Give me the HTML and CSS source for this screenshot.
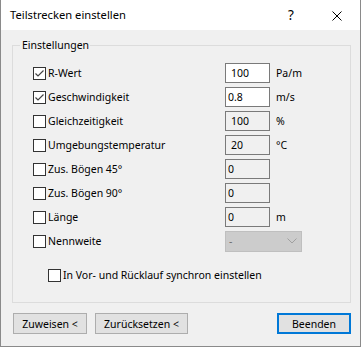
FILE: index.html
```html
<!DOCTYPE html>
<html lang="de">
<head>
<meta charset="utf-8">
<title>Teilstrecken einstellen</title>
<link rel="stylesheet" href="styles.css">
</head>
<body>
<div class="window">
  <div class="titlebar">
    <div class="title">Teilstrecken einstellen</div>
    <div class="tb-btn help">?</div>
    <div class="tb-btn close">
      <svg width="10" height="10" viewBox="0 0 10 10"><path d="M0.5 0.5 L9.5 9.5 M9.5 0.5 L0.5 9.5" stroke="#000" stroke-width="1" fill="none"/></svg>
    </div>
  </div>
  <div class="body">
    <div class="group">
      <div class="group-title">Einstellungen</div>
      <div class="rows">
        <div class="row">
          <label class="chk"><span class="box"><svg width="11" height="11" viewBox="0 0 11 11"><path d="M1.5 5.5 L4 8 L9.5 2.5" stroke="#444" stroke-width="1.2" fill="none"/></svg></span>R-Wert</label>
          <div class="field">100</div><span class="unit">Pa/m</span>
        </div>
        <div class="row">
          <label class="chk"><span class="box"><svg width="11" height="11" viewBox="0 0 11 11"><path d="M1.5 5.5 L4 8 L9.5 2.5" stroke="#444" stroke-width="1.2" fill="none"/></svg></span>Geschwindigkeit</label>
          <div class="field left">0.8</div><span class="unit">m/s</span>
        </div>
        <div class="row">
          <label class="chk"><span class="box"></span>Gleichzeitigkeit</label>
          <div class="field dis">100</div><span class="unit">%</span>
        </div>
        <div class="row">
          <label class="chk"><span class="box"></span>Umgebungstemperatur</label>
          <div class="field dis">20</div><span class="unit">°C</span>
        </div>
        <div class="row">
          <label class="chk"><span class="box"></span>Zus. Bögen 45°</label>
          <div class="field dis left">0</div>
        </div>
        <div class="row">
          <label class="chk"><span class="box"></span>Zus. Bögen 90°</label>
          <div class="field dis left">0</div>
        </div>
        <div class="row">
          <label class="chk"><span class="box"></span>Länge</label>
          <div class="field dis left">0</div><span class="unit">m</span>
        </div>
        <div class="row">
          <label class="chk"><span class="box"></span>Nennweite</label>
          <div class="combo"><span class="combo-val">-</span>
            <svg width="10" height="6" viewBox="0 0 10 6"><path d="M0.5 0.5 L5 5 L9.5 0.5" stroke="#a0a0a0" stroke-width="1" fill="none"/></svg>
          </div>
        </div>
      </div>
      <label class="chk sync"><span class="box"></span>In Vor- und Rücklauf synchron einstellen</label>
    </div>
    <div class="buttons">
      <button class="btn w74">Zuweisen &lt;</button>
      <button class="btn w93">Zurücksetzen &lt;</button>
      <span class="spacer"></span>
      <button class="btn w74 default">Beenden</button>
    </div>
  </div>
</div>
</body>
</html>
```
FILE: styles.css
```css
* { box-sizing: border-box; }
html, body { margin: 0; padding: 0; background: #f0f0f0; }
body {
  font-family: "Noto Sans", "Open Sans", sans-serif;
  font-size: 10.5px;
  color: #000;
}
.window {
  width: 361px;
  height: 347px;
  border: 1px solid #8a8a8a;
  border-top: none;
  background: #f0f0f0;
  display: flex;
  flex-direction: column;
}
.titlebar {
  height: 30px;
  background: #fff;
  display: flex;
  align-items: center;
}
.title {
  flex: 1;
  padding-left: 9px;
  font-size: 11.2px;
  line-height: 16px;
  padding-bottom: 1px;
}
.tb-btn {
  width: 46px;
  height: 30px;
  display: flex;
  align-items: center;
  justify-content: center;
}
.help {
  font-family: "Noto Sans", sans-serif;
  font-size: 13.5px;
  color: #000;
  padding-bottom: 1px;
}
.close svg { display: block; margin-top: 1px; }
.body {
  flex: 1;
  padding: 15px 9px 0 11px;
  display: flex;
  flex-direction: column;
}
.group {
  border: 1px solid #dcdcdc;
  height: 258px;
  padding: 0 0 0 20px;
  display: flex;
  flex-direction: column;
}
.group-title {
  align-self: flex-start;
  margin: -9px 0 0 -13px;
  padding: 0 1px 0 2px;
  background: #f0f0f0;
  line-height: 16px;
  height: 16px;
}
.rows {
  margin-top: 10px;
  display: flex;
  flex-direction: column;
  gap: 4px;
}
.row {
  display: flex;
  align-items: center;
  height: 20px;
}
.chk {
  display: flex;
  align-items: center;
  width: 192px;
  line-height: 16px;
}
.box {
  width: 13px;
  height: 13px;
  border: 1px solid #333;
  background: #fff;
  margin-right: 2px;
  flex: none;
  display: flex;
  align-items: center;
  justify-content: center;
}
.box svg { display: block; }
.field {
  width: 45px;
  height: 20px;
  border: 1px solid #7a7a7a;
  background: #fff;
  padding-left: 5px;
  line-height: 18px;
}
.field.left { padding-left: 2px; }
.field.dis { background: #f0f0f0; }
.unit { margin-left: 6px; line-height: 16px; }
.combo {
  width: 77px;
  height: 21px;
  border: 1px solid #bfbfbf;
  background: #cccccc;
  display: flex;
  align-items: center;
  justify-content: space-between;
  padding: 0 4px 0 3px;
  color: #6d6d6d;
}
.combo svg { display: block; }
.sync {
  width: auto;
  margin: 16px 0 0 15px;
  height: 16px;
}
.buttons {
  display: flex;
  gap: 8px;
  margin-top: 10px;
  padding-left: 1px;
}
.spacer { flex: 1; }
.btn {
  font: inherit;
  height: 21px;
  border: 1px solid #adadad;
  background: #e1e1e1;
  color: #000;
  padding: 0;
  line-height: 18px;
}
.w74 { width: 74px; }
.w93 { width: 93px; }
.btn.default { border: 2px solid #0078d7; }
```
